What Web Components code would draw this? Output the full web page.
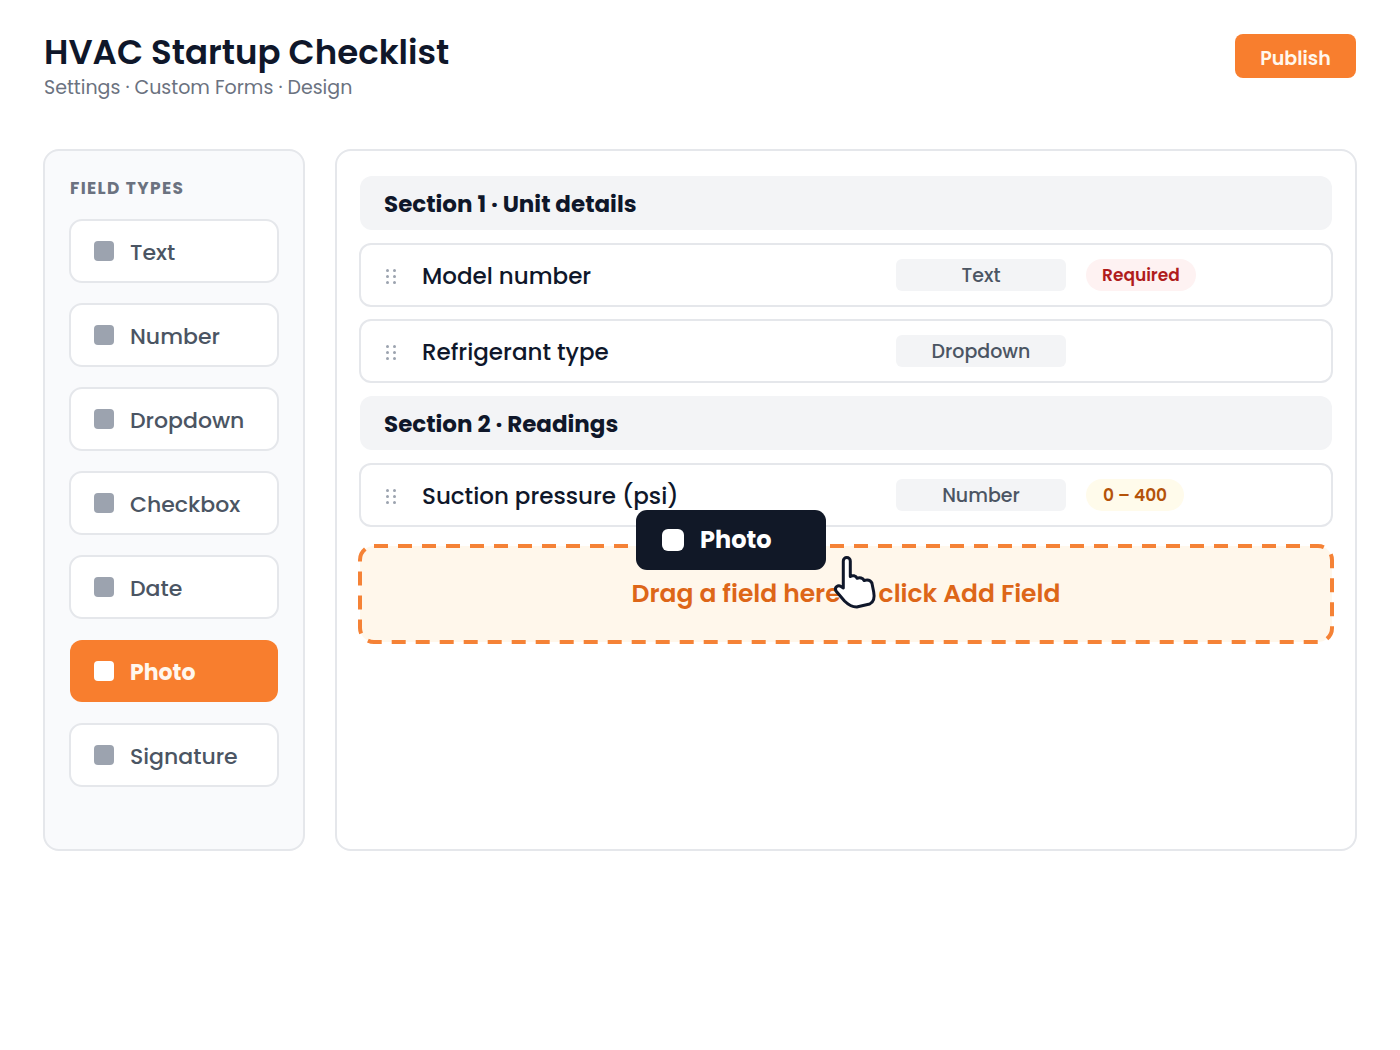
<!DOCTYPE html>
<html lang="en">
<head>
<meta charset="utf-8">
<title>HVAC Startup Checklist</title>
<style>
  body { margin: 0; background: #fff; color: #0f172a; font-family: Poppins, Inter, "Open Sans", sans-serif; }
</style>
</head>
<body>
<form-designer></form-designer>

<template id="t-designer">
  <style>
    :host { display: block; padding: 34px 43px; }
    .columns { display: flex; align-items: stretch; gap: 30px; }
    field-palette { flex: 0 0 262px; }
    form-canvas { flex: 1; min-width: 0; }
  </style>
  <page-header>
    <span slot="title">HVAC Startup Checklist</span>
    <span slot="path">Settings · Custom Forms · Design</span>
  </page-header>
  <main class="columns">
    <field-palette>
      <field-type>Text</field-type>
      <field-type>Number</field-type>
      <field-type>Dropdown</field-type>
      <field-type>Checkbox</field-type>
      <field-type>Date</field-type>
      <field-type active>Photo</field-type>
      <field-type>Signature</field-type>
    </field-palette>
    <form-canvas>
      <form-section>Section 1 · Unit details</form-section>
      <field-row kind="Text">Model number<status-badge slot="badge" tone="red">Required</status-badge></field-row>
      <field-row kind="Dropdown">Refrigerant type</field-row>
      <form-section>Section 2 · Readings</form-section>
      <field-row kind="Number">Suction pressure (psi)<status-badge slot="badge" tone="amber">0 – 400</status-badge></field-row>
      <drop-zone>Drag a field here or click Add Field<drag-chip slot="drag">Photo</drag-chip></drop-zone>
    </form-canvas>
  </main>
</template>

<template id="t-header">
  <style>
    :host { display: flex; justify-content: space-between; align-items: flex-start; padding: 0 1px 47px; }
    h1 { margin: 0; font-size: 34px; line-height: 36px; font-weight: 600; }
    p { margin: 0; padding-top: 4px; font-size: 19px; line-height: 28px; color: #6b7280; }
    button { border: 0; border-radius: 8px; width: 121px; height: 44px; padding: 4px 0 0; background: #f87e2e; color: #fff7ed; font: inherit; font-size: 19px; font-weight: 600; cursor: pointer; }
  </style>
  <div><h1><slot name="title"></slot></h1><p><slot name="path"></slot></p></div>
  <button type="button">Publish</button>
</template>

<template id="t-palette">
  <style>
    :host { display: block; box-sizing: border-box; border: 2px solid #e5e7eb; border-radius: 16px; background: #f9fafc; padding: 24px 24px 62px; }
    h2 { margin: 0; font-size: 17px; line-height: 26px; font-weight: 700; letter-spacing: .08em; color: #6b7280; padding: 0 1px 18px; }
    .list { display: flex; flex-direction: column; gap: 20px; }
  </style>
  <h2>FIELD TYPES</h2>
  <div class="list"><slot></slot></div>
</template>

<template id="t-type">
  <style>
    :host { display: block; }
    button { display: flex; align-items: center; gap: 16px; box-sizing: border-box; width: 100%; height: 64px; border: 2px solid #e5e7eb; border-radius: 13px; background: #fff; color: #4b5563; padding: 0 23px; font: inherit; font-size: 22px; font-weight: 500; line-height: 32px; cursor: grab; }
    i { width: 20px; height: 20px; border-radius: 4px; background: #9ca3af; }
    span { padding-top: 4px; }
    :host([active]) button { background: #f87e2e; background-clip: padding-box; border: 1px solid transparent; padding: 0 24px; color: #fff7ed; font-weight: 700; }
    :host([active]) i { background: #fff; }
  </style>
  <button type="button"><i></i><span><slot></slot></span></button>
</template>

<template id="t-canvas">
  <style>
    :host { display: flex; flex-direction: column; gap: 12px; box-sizing: border-box; border: 2px solid #e5e7eb; border-radius: 16px; background: #fff; padding: 24px 22px; }
  </style>
  <slot></slot>
</template>

<template id="t-section">
  <style>
    :host { display: block; margin: 1px; border-radius: 12px; background: #f3f4f6; }
    h2 { margin: 0; padding: 12px 24px 10px; font-size: 23px; line-height: 32px; font-weight: 700; }
  </style>
  <h2><slot></slot></h2>
</template>

<template id="t-row">
  <style>
    :host { display: flex; align-items: center; box-sizing: border-box; height: 64px; border: 2px solid #e5e7eb; border-radius: 12px; background: #fff; padding: 0 24px; }
    button { flex: none; border: 0; background: none; padding: 2px 0 0; width: 37px; height: 20px; text-align: left; line-height: 0; cursor: grab; }
    .name { flex: 1; font-size: 23px; font-weight: 500; line-height: 32px; padding-top: 2px; }
    .kind { flex: none; box-sizing: border-box; width: 170px; padding-top: 2px; border-radius: 6px; background: #f3f4f6; color: #4b5563; text-align: center; font-size: 19px; font-weight: 500; line-height: 30px; }
    .badge { flex: none; width: 221px; padding-left: 20px; }
  </style>
  <button type="button" aria-label="Reorder field">
    <svg width="12" height="16" fill="#9ca3af"><circle cx="2.5" cy="2.5" r="1.5"/><circle cx="9.5" cy="2.5" r="1.5"/><circle cx="2.5" cy="8.5" r="1.5"/><circle cx="9.5" cy="8.5" r="1.5"/><circle cx="2.5" cy="14.5" r="1.5"/><circle cx="9.5" cy="14.5" r="1.5"/></svg>
  </button>
  <span class="name"><slot></slot></span>
  <span class="kind"></span>
  <span class="badge"><slot name="badge"></slot></span>
</template>

<template id="t-badge">
  <style>
    :host { display: inline-block; box-sizing: border-box; min-width: 98px; border-radius: 16px; padding: 0 16px; text-align: center; font-size: 17px; line-height: 32px; font-weight: 600; vertical-align: top; }
    :host([tone="red"]) { background: #fef2f2; color: #b01c1c; }
    :host([tone="amber"]) { background: #fffbeb; color: #b45309; }
  </style>
  <slot></slot>
</template>

<template id="t-drop">
  <style>
    :host { display: block; position: relative; margin: 5px -1px 0; }
    .outline { display: block; position: absolute; inset: 0; width: 100%; height: 100%; }
    .outline rect { x: 2px; y: 2px; width: calc(100% - 4px); height: calc(100% - 4px); fill: #fff7eb; stroke: #f58236; stroke-width: 4px; stroke-dasharray: 14 10; }
    p { position: relative; margin: 0; padding: 34px 24px; text-align: center; font-size: 25px; line-height: 32px; font-weight: 600; color: #dd6618; }
    .drag { position: absolute; left: 278px; top: -34px; }
    .hand { position: absolute; left: 474px; top: 10px; }
  </style>
  <svg class="outline" aria-hidden="true"><rect rx="14"/></svg>
  <p><slot></slot></p>
  <div class="drag"><slot name="drag"></slot></div>
  <svg class="hand" width="46" height="57" viewBox="0 0 46 57" aria-hidden="true">
    <path d="M11.3 33V7a3.5 3.5 0 0 1 7 0v15.5c2-1.5 5.7-.9 6.7 1.8 2.6-1.2 6-.4 7 2.2 3-.9 6.5-.4 7.9 2.5L41.7 38c1 5 0 10-4 12l-13 3c-5 0-8.7-2.5-12.2-6L4 37c-2-3.5 2-6.5 5-4.5l2.3 1.5z" fill="#fff" stroke="#0f172a" stroke-width="3" stroke-linejoin="round"/>
  </svg>
</template>

<template id="t-chip">
  <style>
    :host { display: flex; align-items: center; gap: 16px; box-sizing: border-box; width: 190px; height: 60px; padding: 0 26px; border-radius: 11px; background: #111827; color: #fff; font-size: 24px; line-height: 32px; font-weight: 700; }
    i { width: 22px; height: 22px; border-radius: 6px; background: #fff; }
  </style>
  <i></i><span><slot></slot></span>
</template>

<script>
  const define = (name, templateId, setup) => customElements.define(name, class extends HTMLElement {
    constructor() {
      super();
      this.attachShadow({ mode: 'open' }).append(document.getElementById(templateId).content.cloneNode(true));
    }
    connectedCallback() { if (setup) setup(this); }
  });
  define('page-header', 't-header');
  define('field-type', 't-type');
  define('field-palette', 't-palette');
  define('form-section', 't-section');
  define('status-badge', 't-badge');
  define('field-row', 't-row', el => { el.shadowRoot.querySelector('.kind').textContent = el.getAttribute('kind'); });
  define('drag-chip', 't-chip');
  define('drop-zone', 't-drop');
  define('form-canvas', 't-canvas');
  define('form-designer', 't-designer');
</script>
</body>
</html>
